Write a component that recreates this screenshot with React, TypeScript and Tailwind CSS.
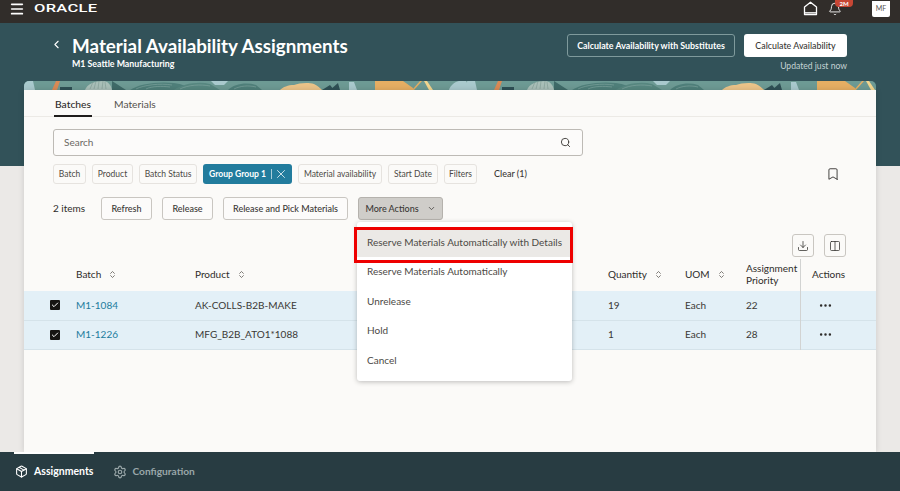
import React from 'react';
import { ChevronLeft, ChevronDown, ChevronsUpDown, Search, X, Bookmark, Download, Columns2, Bell, Package, Settings, Menu, Ellipsis, Check } from 'lucide-react';

const font = { fontFamily: 'Lato, "Noto Sans", sans-serif' };

const rows = [
  { batch: 'M1-1084', product: 'AK-COLLS-B2B-MAKE', qty: '19', prio: '22' },
  { batch: 'M1-1226', product: 'MFG_B2B_ATO1*1088', qty: '1', prio: '28' },
];

const menuItems = ['Reserve Materials Automatically', 'Unrelease', 'Hold', 'Cancel'];

const Chip = ({ label, className }: { label: string; className: string }) => (
  <span className={`flex h-[20px] items-center justify-center rounded-[3px] border border-[#e6e3df] bg-[#fbfaf8] text-[8.5px] text-[#4c4945] ${className}`}>
    {label}
  </span>
);

const Btn = ({ label, className }: { label: string; className: string }) => (
  <button className={`flex h-[23px] items-center justify-center rounded-[3px] border border-[#c9c6c1] bg-[#fcfbfa] text-[9px] font-medium text-[#3a3835] ${className}`}>
    {label}
  </button>
);

const SortHead = ({ label, className }: { label: string; className: string }) => (
  <div className={`flex items-center gap-[7px] ${className}`}>
    <span>{label}</span>
    <ChevronsUpDown className="h-[9px] w-[9px] text-[#55524e]" />
  </div>
);

// one period of the leaf pattern on the strip above the card
const BannerTile = ({ x }: { x: number }) => (
  <g transform={`translate(${x} 0)`}>
    <path d="M0 9V2q0-2 2-2h7l2 9z" fill="#a9c9cd" />
    <path d="M32 0h4l-3 9h-5z" fill="#d98a55" />
    <path d="M36 6h12v3H36z" fill="#2f5055" />
    <path d="M61 9c2-6 10-9 18-9 5 0 8 4 9 9z" fill="#a9bfb8" />
    <path d="M66 8l3-7M70 8l2-8M74 8l1-8M78 8l1-8M82 8l-1-7" stroke="#7f9a94" strokeWidth="0.6" fill="none" />
    <path d="M88 0l14 9H88z" fill="#3f6a68" />
    <path d="M106 9c8-6 28-9 44-7 8 1 14 4 20 7z" fill="#4f7f7a" />
    <path d="M112 8c8-4 24-6 36-4M122 8c6-3 16-3 24-2" stroke="#8fb0aa" strokeWidth="0.5" fill="none" />
    <path d="M150 9c8-6 24-9 36-6l10 6z" fill="#578780" />
    <path d="M156 8c8-4 20-5 30-3" stroke="#8fb0aa" strokeWidth="0.5" fill="none" />
    <path d="M187 0h17l-4 4h-9z" fill="#a9c9cd" />
    <path d="M204 9c6-6 18-8 28-5l6 5z" fill="#4f7f7a" />
    <path d="M210 8c6-3 14-4 22-2" stroke="#8fb0aa" strokeWidth="0.5" fill="none" />
    <path d="M256 9c3-3 8-5 14-5 5-2 14-3 20-1 4 2 6 4 8 6z" fill="#ebc489" />
    <path d="M298 9l8-5 4 5zM306 9l8-7 2 7z" fill="#2f5055" />
    <path d="M325 1h5l3 8h-8z" fill="#a9c9cd" />
    <path d="M351 0h28l10 7v2h-38z" fill="#e5ae63" />
    <path d="M388 9l8-9h2l-8 9z" fill="#e5ae63" />
    <path d="M400 0h3l6 9h-4z" fill="#f3d58e" />
    <path d="M425 9c1-4 5-8 10-9h7v9z" fill="#a9c9cd" />
  </g>
);

const Banner = () => (
  <svg viewBox="0 0 852 9" className="block h-[9px] w-[852px]">
    <rect width="852" height="9" fill="#6d9a94" />
    <BannerTile x={0} />
    <BannerTile x={442} />
  </svg>
);

const OracleHome = () => (
  <svg viewBox="0 0 15 15" className="h-[15px] w-[15px]" fill="none" stroke="#fff" strokeWidth="1.3">
    <path d="M7.5 1.2L1.5 6v7.5h12V6z" strokeLinejoin="round" />
    <path d="M1.5 11.8h12" />
  </svg>
);

export default function App() {
  return (
    <div style={font} className="relative flex h-[491px] w-[900px] flex-col overflow-hidden bg-[#ebe9e7] text-[#2e2c2a]">
      {/* top bar */}
      <header className="flex h-[23px] shrink-0 items-center bg-[#312d2a] pl-[9px] pr-[10px]">
        <Menu className="h-[16px] w-[16px] -translate-y-[3px] text-white" strokeWidth={2.5} />
        <span style={{ fontFamily: 'Roboto, sans-serif' }} className="ml-[9px] origin-left -translate-y-[3px] scale-x-[1.5] text-[11px] font-medium leading-none tracking-[0.2px] text-white">ORACLE</span>
        <div className="ml-auto flex items-center">
          <div className="-translate-y-[3px]"><OracleHome /></div>
          <div className="relative ml-[10px] -translate-y-[3px]">
            <Bell className="h-[14px] w-[14px] text-white" strokeWidth={1.5} />
          </div>
          <span className="ml-[30px] flex h-[16px] w-[18px] -translate-y-[3px] items-center justify-center rounded-b-[2px] bg-white text-[7px] text-[#55524e]">MF</span>
        </div>
      </header>
      <span className="absolute left-[835px] top-0 z-10 flex h-[7px] w-[18px] items-center justify-center rounded-b-[4px] bg-[#c74634] text-[6px] font-bold leading-none text-white">2M</span>

      {/* page header */}
      <section className="flex h-[143px] shrink-0 flex-col bg-[#325259]">
        <div className="flex h-[58px] shrink-0 pl-[50px] pr-[53px] pt-[11px]">
          <ChevronLeft className="mt-[4px] h-[13px] w-[13px] text-white" strokeWidth={2} />
          <div className="ml-[9px]">
            <h1 className="text-[18.8px] font-bold leading-[23px] text-white">Material Availability Assignments</h1>
            <p className="mt-[1px] text-[8.8px] font-bold leading-[12px] text-white">M1 Seattle Manufacturing</p>
          </div>
          <div className="ml-auto flex flex-col items-end">
            <div className="flex items-center gap-[9px]">
              <button className="h-[23px] w-[168px] rounded-[3px] border border-[#7f9a9c] text-[8.85px] font-bold text-white">Calculate Availability with Substitutes</button>
              <button className="h-[23px] w-[103px] rounded-[3px] bg-white text-[8.85px] font-medium text-[#3a3835]">Calculate Availability</button>
            </div>
            <span className="mt-[3px] text-[8.6px] leading-[12px] text-[#c5d3d4]">Updated just now</span>
          </div>
        </div>
        <div className="ml-[24px] w-[852px] overflow-hidden rounded-t-[5px]">
          <Banner />
        </div>
      </section>

      {/* card */}
      <main className="relative z-10 mx-[24px] -mt-[76px] flex h-[362px] flex-col bg-[#fbfaf8] pt-[7px] shadow-[0_0_6px_rgba(0,0,0,0.14)]">
        <nav className="flex h-[20px] shrink-0 gap-[22px] border-b border-[#eceae6] pl-[30px] text-[10.3px]">
          <span className="h-[20px] border-b-2 border-[#1f1d1c] px-[1px] font-medium text-[#2e2c2a]">Batches</span>
          <span className="text-[#55524e]">Materials</span>
        </nav>

        <div className="ml-[29px] mt-[12px] flex h-[27px] w-[530px] shrink-0 items-center justify-between rounded-[3px] border border-[#bdbab5] bg-[#fcfbfa] pl-[10px] pr-[11px] text-[10px] text-[#6b6864]">
          <span>Search</span>
          <Search className="h-[11px] w-[11px] text-[#3a3835]" strokeWidth={2} />
        </div>

        <div className="ml-[29px] mt-[8px] flex h-[20px] shrink-0 items-center gap-[6px] pr-[36px]">
          <Chip label="Batch" className="w-[33px]" />
          <Chip label="Product" className="w-[41px]" />
          <Chip label="Batch Status" className="w-[58px]" />
          <span className="flex h-[20px] w-[89px] items-center rounded-[3px] bg-[#227c9d] pl-[6px] text-[8.6px] font-bold text-white">
            Group Group 1
            <span className="ml-[5px] h-[10px] w-px bg-[#a9ccd8]" />
            <X className="ml-[2px] h-[14px] w-[14px]" strokeWidth={1.3} />
          </span>
          <Chip label="Material availability" className="w-[84px]" />
          <Chip label="Start Date" className="w-[50px]" />
          <Chip label="Filters" className="w-[33px]" />
          <span className="ml-[11px] text-[9px] font-medium text-[#3a3835]">Clear (1)</span>
          <Bookmark className="ml-auto h-[14px] w-[14px] text-[#2e2c2a]" strokeWidth={1.5} />
        </div>

        <div className="ml-[29px] mt-[13px] flex h-[23px] shrink-0 items-center">
          <span className="w-[48px] text-[10px] text-[#2e2c2a]">2 items</span>
          <Btn label="Refresh" className="w-[51px]" />
          <Btn label="Release" className="ml-[10px] w-[51px]" />
          <Btn label="Release and Pick Materials" className="ml-[10px] w-[125px]" />
          <button className="ml-[10px] flex h-[23px] w-[85px] items-center justify-center gap-[8px] rounded-[3px] border border-[#b5b2ad] bg-[#cfcdc9] text-[9px] font-medium text-[#3a3835]">
            More Actions
            <ChevronDown className="h-[9px] w-[9px]" strokeWidth={2} />
          </button>
        </div>

        <div className="mt-[14px] flex h-[23px] shrink-0 justify-end gap-[10px] pr-[30px]">
          <span className="flex h-[23px] w-[22px] items-center justify-center rounded-[3px] border border-[#c9c6c1]">
            <Download className="h-[12px] w-[12px]" strokeWidth={1.5} />
          </span>
          <span className="flex h-[23px] w-[22px] items-center justify-center rounded-[3px] border border-[#c9c6c1]">
            <Columns2 className="h-[12px] w-[12px]" strokeWidth={1.5} />
          </span>
        </div>

        {/* table */}
        <div className="relative mt-[2px]">
          <div className="flex h-[32px] items-center pb-[2px] text-[10px] text-[#2e2c2a]">
            <SortHead label="Batch" className="ml-[52px] w-[119px]" />
            <SortHead label="Product" className="w-[413px]" />
            <SortHead label="Quantity" className="w-[77px]" />
            <SortHead label="UOM" className="w-[61px]" />
            <div className="w-[55px] leading-[12px]">Assignment Priority</div>
            <div className="pl-[11px]">Actions</div>
          </div>
          {rows.map((r) => (
            <div key={r.batch} className="flex h-[29.5px] items-center border-b border-[#d5e3ea] bg-[#e3f0f7] text-[10px] text-[#3a3835]">
              <span className="ml-[25.5px] flex h-[10px] w-[10px] items-center justify-center rounded-[1px] bg-[#161513]">
                <Check className="h-[8px] w-[8px] text-white" strokeWidth={3} />
              </span>
              <span className="ml-[16.5px] w-[119px] text-[#227c9d]">{r.batch}</span>
              <span className="w-[413px]">{r.product}</span>
              <span className="w-[77px]">{r.qty}</span>
              <span className="w-[61px]">Each</span>
              <span className="w-[55px]">{r.prio}</span>
              <Ellipsis className="ml-[17px] h-[15px] w-[15px] text-[#2e2c2a]" strokeWidth={2} />
            </div>
          ))}
          <div className="absolute bottom-0 left-[776px] top-0 w-px bg-[#d2d3d2]" />
        </div>
      </main>

      {/* footer */}
      <footer className="absolute inset-x-0 bottom-0 z-20 flex h-[39px] items-center bg-[#283c42] pl-[15px] text-[10.5px] font-bold">
        <div className="absolute left-[14px] top-0 h-[2px] w-[80px] bg-white" />
        <Package className="h-[13px] w-[13px] text-white" strokeWidth={2} />
        <span className="ml-[6px] text-white">Assignments</span>
        <Settings className="ml-[20px] h-[14px] w-[14px] text-[#9aa7a9]" strokeWidth={2} />
        <span className="ml-[5px] text-[10.2px] text-[#9aa7a9]">Configuration</span>
      </footer>

      {/* more actions menu */}
      <div className="absolute left-[357px] top-[222px] z-30 w-[215px] rounded-[3px] bg-white pb-[6px] pt-[5.5px] text-[10px] text-[#4c4945] shadow-[0_1px_5px_rgba(0,0,0,0.25)]">
        <div className="flex h-[29.5px] items-center bg-[#ebe9e6] pl-[10px]">Reserve Materials Automatically with Details</div>
        {menuItems.map((m) => (
          <div key={m} className="flex h-[29.5px] items-center pl-[10px]">{m}</div>
        ))}
      </div>
      {/* highlight box */}
      <div className="absolute left-[354px] top-[227px] z-40 h-[36px] w-[219px] border-[3px] border-[#ee0000]" />
    </div>
  );
}
